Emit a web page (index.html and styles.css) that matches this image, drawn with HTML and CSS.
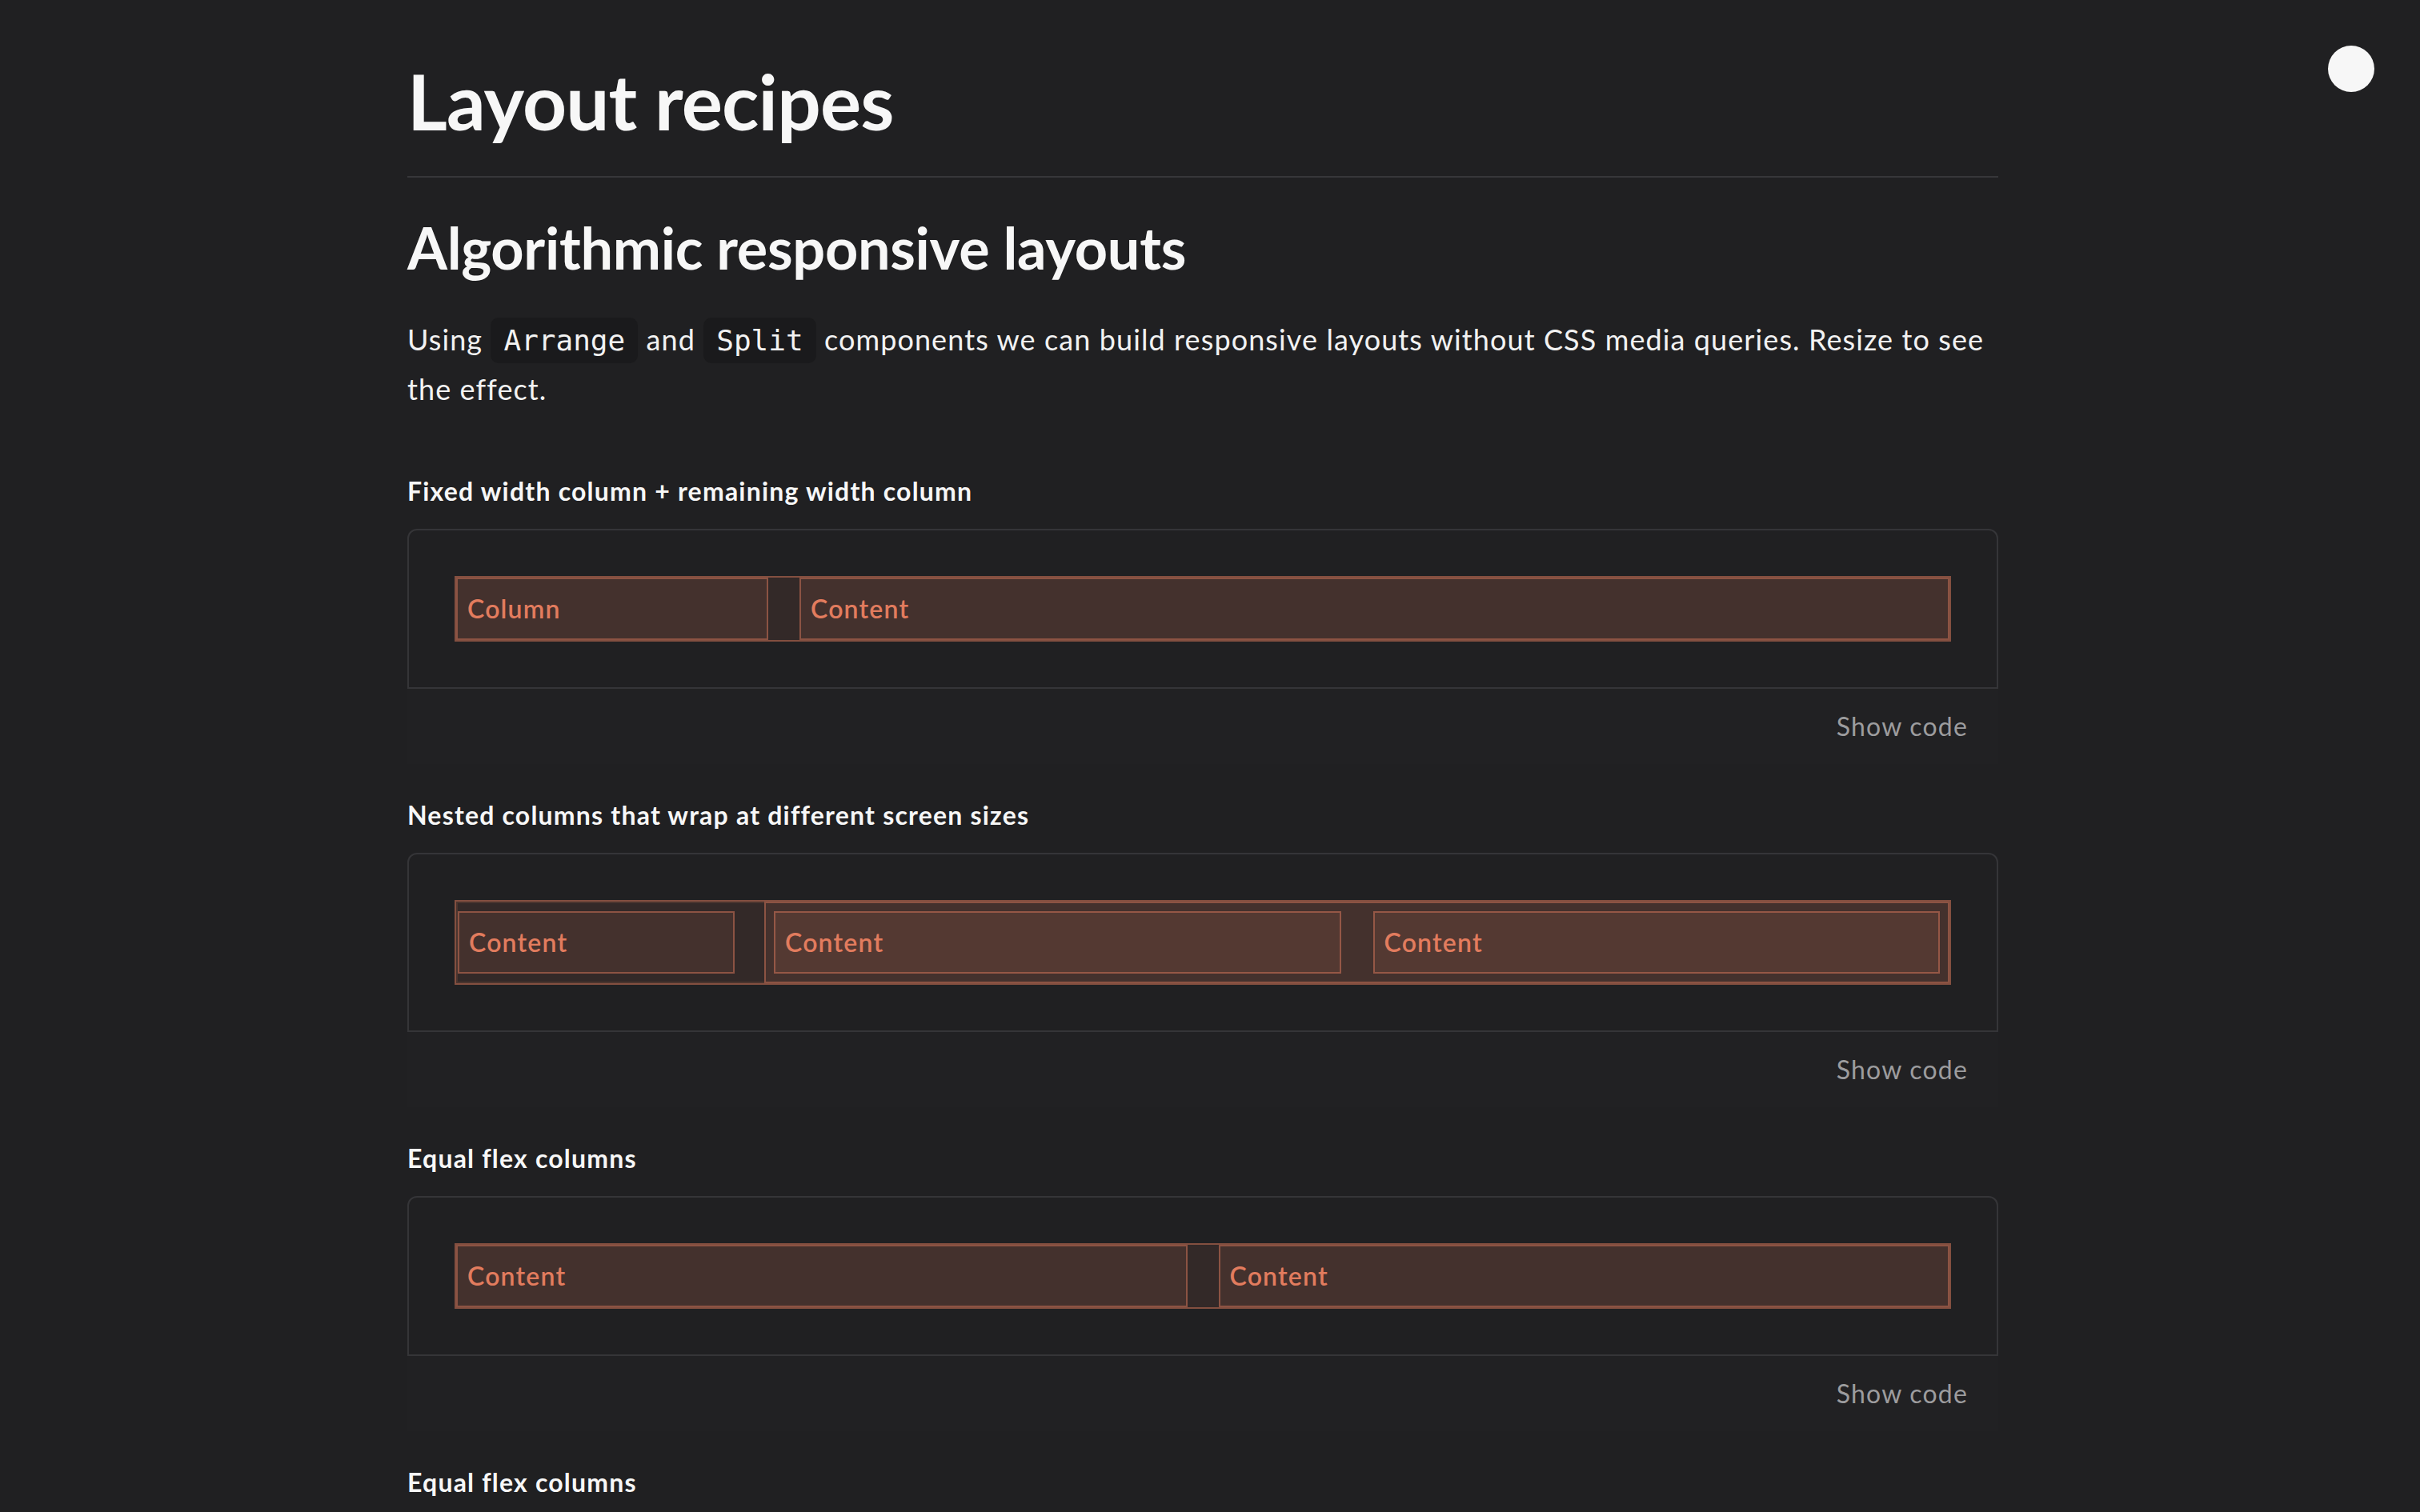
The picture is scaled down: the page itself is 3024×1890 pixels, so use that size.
FILE: index.html
```html
<!DOCTYPE html>
<html lang="en">
<head>
<meta charset="utf-8">
<title>Layout recipes</title>
<link rel="stylesheet" href="styles.css">
</head>
<body>
<button class="theme-toggle" aria-label="Toggle theme"></button>
<main class="page">
  <h1 class="title">Layout recipes</h1>
  <h2 class="subtitle">Algorithmic responsive layouts</h2>
  <p class="intro">Using <code class="code">Arrange</code> and <code class="code">Split</code> components we can build responsive layouts without CSS media queries. Resize to see the effect.</p>

  <section class="recipe">
    <h3 class="recipe-title">Fixed width column + remaining width column</h3>
    <div class="card">
      <div class="box row">
        <div class="box cell fixed"><span class="label">Column</span></div>
        <div class="box cell grow"><span class="label">Content</span></div>
      </div>
    </div>
    <div class="card-footer"><span class="show-code">Show code</span></div>
  </section>

  <section class="recipe">
    <h3 class="recipe-title">Nested columns that wrap at different screen sizes</h3>
    <div class="card">
      <div class="box row nested">
        <div class="group left">
          <div class="box cell grow"><span class="label">Content</span></div>
        </div>
        <div class="box group right">
          <div class="box cell grow"><span class="label">Content</span></div>
          <div class="box cell grow"><span class="label">Content</span></div>
        </div>
      </div>
    </div>
    <div class="card-footer"><span class="show-code">Show code</span></div>
  </section>

  <section class="recipe">
    <h3 class="recipe-title">Equal flex columns</h3>
    <div class="card">
      <div class="box row">
        <div class="box cell grow"><span class="label">Content</span></div>
        <div class="box cell grow"><span class="label">Content</span></div>
      </div>
    </div>
    <div class="card-footer"><span class="show-code">Show code</span></div>
  </section>

  <section class="recipe">
    <h3 class="recipe-title">Equal flex columns</h3>
  </section>
</main>
</body>
</html>
```

FILE: styles.css
```css
html, body {
  margin: 0;
  padding: 0;
  background: #202022;
}

body {
  font-family: "Lato", "Noto Sans", "Liberation Sans", sans-serif;
  color: #f7f7f7;
  overflow: hidden;
  height: 1890px;
}

.theme-toggle {
  position: fixed;
  top: 57px;
  right: 57px;
  width: 58px;
  height: 58px;
  border-radius: 50%;
  border: 0;
  padding: 0;
  background: #f7f7f7;
}

.page {
  margin-left: 509px;
  width: 1988px;
  padding-top: 68px;
}

.title {
  margin: 0;
  font-size: 96px;
  line-height: 115px;
  font-weight: 700;
  letter-spacing: -0.8px;
  padding-bottom: 37px;
  border-bottom: 2px solid #37373a;
}

.subtitle {
  margin: 44px 0 0;
  font-size: 72px;
  line-height: 86px;
  font-weight: 700;
  letter-spacing: -0.3px;
}

.intro {
  margin: 41px 0 0;
  font-size: 36px;
  line-height: 62px;
  letter-spacing: 1.1px;
  color: #f2f2f2;
}

.code {
  font-family: "DejaVu Sans Mono", "Liberation Mono", monospace;
  font-size: 36px;
  line-height: 1;
  letter-spacing: 0;
  background: #1a1a1c;
  padding: 8px 16px;
  border-radius: 10px;
  color: #f2f2f2;
}

.recipe {
  margin-top: 40px;
}

.recipe:first-of-type {
  margin-top: 73px;
}

.recipe-title {
  margin: 0 0 23px;
  font-size: 32px;
  line-height: 48px;
  font-weight: 700;
  letter-spacing: 1.2px;
}

.card {
  border: 2px solid #353538;
  border-radius: 12px 12px 0 0;
  padding: 57px;
}

.card-footer {
  display: flex;
  justify-content: flex-end;
  padding: 23px 38px 23px;
  background: #212123;
}

.show-code {
  font-size: 32px;
  line-height: 48px;
  letter-spacing: 1.2px;
  color: #9c9c9e;
}

.box {
  background: rgba(226, 124, 94, 0.1);
  border: 2px solid rgba(226, 124, 94, 0.46);
}

.row {
  display: flex;
  gap: 39px;
}

.cell {
  box-sizing: border-box;
  padding: 13px 12px;
  min-width: 0;
}

.fixed {
  flex: 0 0 390px;
}

.grow {
  flex: 1 1 0;
}

.label {
  display: block;
  font-size: 32px;
  line-height: 48px;
  font-weight: 600;
  letter-spacing: 1.2px;
  color: #e27c5e;
}

.nested {
  gap: 0;
}

.group {
  display: flex;
  gap: 40px;
  padding: 10px;
}

.group.left {
  flex: 0 0 385px;
  box-sizing: border-box;
  padding: 10px 37px 10px 0;
  border: 2px solid rgba(226, 124, 94, 0.14);
  border-right: 0;
}

.group.right {
  flex: 1 1 0;
}
```
